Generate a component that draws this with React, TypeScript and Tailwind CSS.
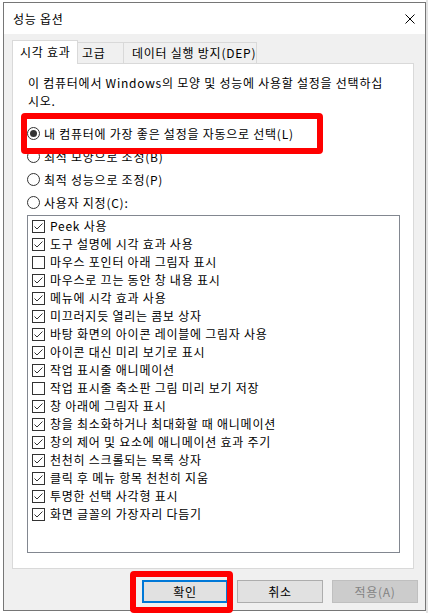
import React from "react";

const items: [string, boolean][] = [
  ["Peek 사용", true],
  ["도구 설명에 시각 효과 사용", true],
  ["마우스 포인터 아래 그림자 표시", false],
  ["마우스로 끄는 동안 창 내용 표시", true],
  ["메뉴에 시각 효과 사용", true],
  ["미끄러지듯 열리는 콤보 상자", true],
  ["바탕 화면의 아이콘 레이블에 그림자 사용", true],
  ["아이콘 대신 미리 보기로 표시", true],
  ["작업 표시줄 애니메이션", true],
  ["작업 표시줄 축소판 그림 미리 보기 저장", false],
  ["창 아래에 그림자 표시", true],
  ["창을 최소화하거나 최대화할 때 애니메이션", true],
  ["창의 제어 및 요소에 애니메이션 효과 주기", true],
  ["천천히 스크롤되는 목록 상자", true],
  ["클릭 후 메뉴 항목 천천히 지움", true],
  ["투명한 선택 사각형 표시", true],
  ["화면 글꼴의 가장자리 다듬기", true],
];

function Radio({ label, checked }: { label: string; checked?: boolean }) {
  return (
    <div className="h-[23px] flex items-center -ml-px">
      <div className="w-[13px] h-[13px] rounded-full border border-[#333333] bg-white flex items-center justify-center">
        {checked && <div className="w-[7px] h-[7px] rounded-full bg-[#333333]" />}
      </div>
      <span className="ml-[4px] leading-[18px]">{label}</span>
    </div>
  );
}

function Check({ checked }: { checked: boolean }) {
  return (
    <div className="w-[13px] h-[13px] border border-[#333333] bg-white shrink-0">
      {checked && (
        <svg width="11" height="11" viewBox="0 0 11 11">
          <path d="M1.5 5.5 L4 8 L9.5 2.5" fill="none" stroke="#333333" strokeWidth="1" />
        </svg>
      )}
    </div>
  );
}

export default function App() {
  return (
    <div className="relative w-[428px] h-[613px] overflow-hidden bg-white text-[12px] tracking-[0.75px] text-black font-['Noto_Sans_CJK_KR','Noto_Sans',sans-serif] flex">
      <div className="w-[3px] shrink-0 bg-white" />
      <div className="mt-[2px] w-[423px] h-[609px] shrink-0 border border-[#767676] bg-[#f0f0f0] flex flex-col">
        {/* Title bar */}
        <div className="h-[31px] bg-white flex items-center justify-between pl-[9px] pr-[10px]">
          <span className="leading-[18px]">성능 옵션</span>
          <svg width="10" height="10" viewBox="0 0 10 10">
            <path d="M0.5 0.5 L9.5 9.5 M9.5 0.5 L0.5 9.5" stroke="#000" strokeWidth="1" />
          </svg>
        </div>

        {/* Tabs */}
        <div className="ml-[8px] mt-[6px]">
          <div className="flex items-end h-[23px] relative z-10">
            <div className="h-[24px] -mb-px w-[66px] bg-white border border-b-0 border-[#d9d9d9] pl-[7px] flex items-center">
              <span className="leading-[18px] -mt-[1px] whitespace-nowrap">시각 효과</span>
            </div>
            <div className="h-[21px] w-[46px] border border-l-0 border-b-0 border-[#d9d9d9] pl-[4px] flex items-center">
              <span className="leading-[18px]">고급</span>
            </div>
            <div className="h-[21px] w-[133px] border border-l-0 border-b-0 border-[#d9d9d9] pl-[8px] flex items-center">
              <span className="leading-[18px] whitespace-nowrap">데이터 실행 방지(DEP)</span>
            </div>
          </div>

          {/* Panel */}
          <div className="w-[402px] h-[506px] border border-[#d9d9d9] bg-white pl-[15px] pt-[10px]">
            <p className="leading-[18px] whitespace-nowrap">
              이 컴퓨터에서 Windows의 모양 및 성능에 사용할 설정을 선택하십
              <br />
              시오.
            </p>
            <div className="mt-[12px]">
              <Radio label="내 컴퓨터에 가장 좋은 설정을 자동으로 선택(L)" checked />
              <Radio label="최적 모양으로 조정(B)" />
              <Radio label="최적 성능으로 조정(P)" />
              <Radio label="사용자 지정(C):" />
            </div>
            <div className="-ml-px mt-[1px] w-[373px] h-[338px] border border-[#828790] bg-white pt-[1px] pl-[4px]">
              {items.map(([label, checked]) => (
                <div key={label} className="h-[18px] flex items-center">
                  <Check checked={checked} />
                  <span className="ml-[5px] leading-[18px] whitespace-nowrap">{label}</span>
                </div>
              ))}
            </div>
          </div>
        </div>

        {/* Buttons */}
        <div className="mt-[11px] flex justify-end gap-[9px] pr-[7px]">
          <div className="w-[86px] h-[23px] bg-[#e1e1e1] border-2 border-[#0078d7] flex items-center justify-center">
            <span className="leading-[18px]">확인</span>
          </div>
          <div className="w-[86px] h-[23px] bg-[#e1e1e1] border border-[#adadad] flex items-center justify-center">
            <span className="leading-[18px]">취소</span>
          </div>
          <div className="w-[86px] h-[23px] bg-[#cccccc] border border-[#bfbfbf] flex items-center justify-center">
            <span className="leading-[18px] text-[#838383]">적용(A)</span>
          </div>
        </div>
      </div>
      <div className="flex-1 bg-[#e3e3e3]" />

      {/* Annotation highlights */}
      <div className="absolute left-[21px] top-[113px] w-[302px] h-[41px] border-[6px] border-[#ff0000] rounded-[4px]" />
      <div className="absolute left-[130px] top-[571px] w-[103px] h-[42px] border-[6px] border-[#ff0000] rounded-[4px]" />
    </div>
  );
}
